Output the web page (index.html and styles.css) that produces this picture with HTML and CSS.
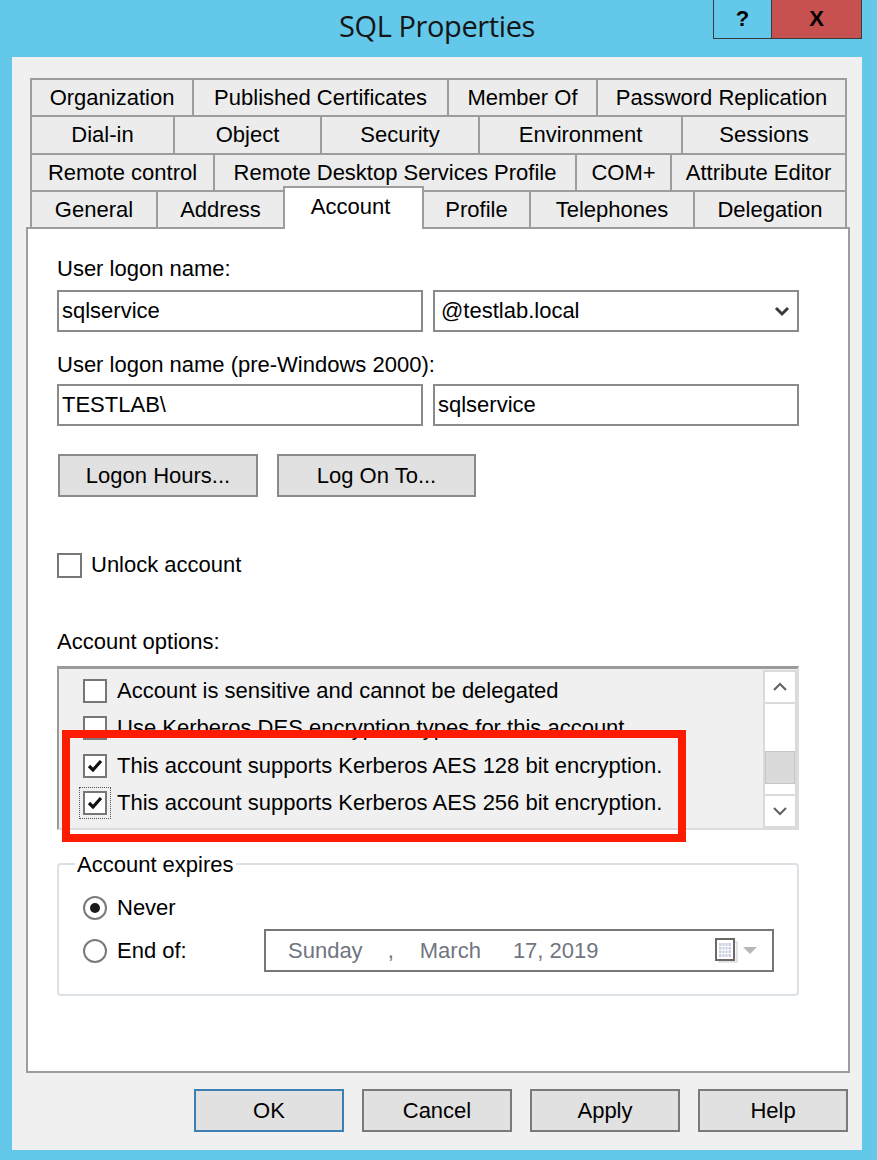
FILE: index.html
```html
<!DOCTYPE html>
<html>
<head>
<meta charset="utf-8">
<title>SQL Properties</title>
<link rel="stylesheet" href="styles.css">
</head>
<body>
<div class="window">
  <div class="titlebar">
    <div class="tb-side"></div>
    <div class="title">SQL Properties</div>
    <div class="caption-btns">
      <div class="cap help">?</div>
      <div class="cap close">X</div>
    </div>
  </div>
  <div class="dialog">
    <div class="tabs">
      <div class="tab-row r1">
        <div class="tab">Organization</div>
        <div class="tab">Published Certificates</div>
        <div class="tab">Member Of</div>
        <div class="tab">Password Replication</div>
      </div>
      <div class="tab-row r2">
        <div class="tab">Dial-in</div>
        <div class="tab">Object</div>
        <div class="tab">Security</div>
        <div class="tab">Environment</div>
        <div class="tab">Sessions</div>
      </div>
      <div class="tab-row r3">
        <div class="tab">Remote control</div>
        <div class="tab">Remote Desktop Services Profile</div>
        <div class="tab">COM+</div>
        <div class="tab">Attribute Editor</div>
      </div>
      <div class="tab-row r4">
        <div class="tab">General</div>
        <div class="tab">Address</div>
        <div class="tab active">Account</div>
        <div class="tab">Profile</div>
        <div class="tab">Telephones</div>
        <div class="tab">Delegation</div>
      </div>
    </div>

    <div class="panel">
      <div class="label">User logon name:</div>
      <div class="field-row">
        <div class="input">sqlservice</div>
        <div class="input combo">
          <span class="combo-text">@testlab.local</span>
          <svg class="chev" width="16" height="11" viewBox="0 0 16 11"><polyline points="2,2 8,8 14,2" fill="none" stroke="#3a3a3a" stroke-width="3"/></svg>
        </div>
      </div>
      <div class="label label2">User logon name (pre-Windows 2000):</div>
      <div class="field-row row2">
        <div class="input">TESTLAB\</div>
        <div class="input">sqlservice</div>
      </div>
      <div class="btn-row">
        <div class="btn hours">Logon Hours...</div>
        <div class="btn logon-to">Log On To...</div>
      </div>

      <div class="check-row unlock">
        <span class="checkbox"></span>
        <span class="check-label">Unlock account</span>
      </div>

      <div class="label options-label">Account options:</div>
      <div class="options-wrap">
        <div class="listbox">
          <div class="items">
            <div class="item"><span class="checkbox"></span><span class="item-text">Account is sensitive and cannot be delegated</span></div>
            <div class="item"><span class="checkbox"></span><span class="item-text">Use Kerberos DES encryption types for this account</span></div>
            <div class="item"><span class="checkbox checked"><svg width="20" height="20" viewBox="0 0 20 20"><polyline points="4,10 8,14 16,5" fill="none" stroke="#111" stroke-width="3.2"/></svg></span><span class="item-text">This account supports Kerberos AES 128 bit encryption.</span></div>
            <div class="item"><span class="checkbox checked focus"><svg width="20" height="20" viewBox="0 0 20 20"><polyline points="4,10 8,14 16,5" fill="none" stroke="#111" stroke-width="3.2"/></svg></span><span class="item-text">This account supports Kerberos AES 256 bit encryption.</span></div>
          </div>
          <div class="scrollbar">
            <div class="sb-btn sb-up"><svg width="16" height="10" viewBox="0 0 16 10"><polyline points="2,8 8,2 14,8" fill="none" stroke="#606060" stroke-width="2"/></svg></div>
            <div class="sb-track1"></div>
            <div class="sb-thumb"></div>
            <div class="sb-track2"></div>
            <div class="sb-btn sb-down"><svg width="16" height="10" viewBox="0 0 16 10"><polyline points="2,2 8,8 14,2" fill="none" stroke="#606060" stroke-width="2"/></svg></div>
          </div>
        </div>
        <div class="highlight"></div>
      </div>

      <div class="group">
        <div class="group-title">Account expires</div>
        <div class="radio-row never">
          <span class="radio checked"></span>
          <span class="radio-label">Never</span>
        </div>
        <div class="radio-row endof">
          <span class="radio"></span>
          <span class="radio-label">End of:</span>
          <div class="datepicker">
            <span class="d-day">Sunday</span>
            <span class="d-comma">,</span>
            <span class="d-month">March</span>
            <span class="d-date">17, 2019</span>
            <svg class="cal" width="24" height="26" viewBox="0 0 24 26">
              <rect x="4" y="4" width="18" height="20" fill="#f4f4f4" stroke="#d0d0d0" stroke-width="1"/>
              <rect x="1" y="1" width="18" height="21" fill="#fff" stroke="#6d6867" stroke-width="2"/>
              <rect x="4" y="5" width="12" height="14" fill="#c9cde0"/>
              <path d="M4 8.5H16M4 12H16M4 15.5H16M7 5V19M10 5V19M13 5V19" stroke="#fff" stroke-width="1"/>
            </svg>
            <svg class="tri" width="16" height="9" viewBox="0 0 16 9"><polygon points="1,1 15,1 8,8" fill="#b8b8b8"/></svg>
          </div>
        </div>
      </div>
    </div>

    <div class="dlg-buttons">
      <div class="dlg-btn default">OK</div>
      <div class="dlg-btn">Cancel</div>
      <div class="dlg-btn">Apply</div>
      <div class="dlg-btn">Help</div>
    </div>
  </div>
</div>
</body>
</html>
```

FILE: styles.css
```css
* { box-sizing: border-box; }
html, body { margin: 0; padding: 0; }
body {
  background: #63c8ea;
  font-family: "Liberation Sans", Arial, sans-serif;
  font-size: 22px;
  color: #000;
  width: 877px;
  height: 1160px;
  overflow: hidden;
}
.window { width: 850px; margin-left: 12px; }

.titlebar {
  height: 57px;
  display: grid;
  grid-template-columns: 1fr auto 1fr;
}
.title {
  font-family: "Open Sans", "Noto Sans", sans-serif;
  font-size: 29px;
  line-height: 52px;
  color: #151515;
  letter-spacing: -0.4px;
}
.caption-btns {
  justify-self: end;
  align-self: start;
  display: flex;
  height: 39px;
  border: 1px solid #3a3a3a;
  border-top: none;
}
.cap {
  display: flex;
  align-items: center;
  justify-content: center;
  font-weight: bold;
  font-size: 22px;
  color: #000;
}
.cap.help { width: 58px; border-right: 1px solid #3a3a3a; }
.cap.close { width: 89px; background: #c75050; }

.dialog {
  background: #f0f0f0;
  padding: 21px 12px 18px 14px;
  height: 1093px;
}

.tabs { margin: 0 3px 0 4px; }
.tab-row { display: grid; height: 37px; }
.tab-row.r2 { height: 38px; }
.r1 { grid-template-columns: 162px 255px 149px 251px; }
.r2 { grid-template-columns: 143px 147px 158px 203px 166px; }
.r3 { grid-template-columns: 183px 362px 95px 177px; }
.r4 { grid-template-columns: 126px 127px 139px 107px 164px 154px; }
.tab {
  border-top: 2px solid #9d9d9d;
  border-left: 2px solid #9d9d9d;
  background: #ececec;
  display: flex;
  align-items: center;
  justify-content: center;
  white-space: nowrap;
}
.tab:last-child { border-right: 2px solid #9d9d9d; }
.tab.active {
  background: #fff;
  margin: -4px -2px -2px 0;
  padding: 0 6px 4px 0;
  border-right: 2px solid #9d9d9d;
  position: relative;
  z-index: 1;
}

.panel {
  background: #fff;
  border: 2px solid #9d9d9d;
  height: 846px;
  padding: 27px 49px 0 29px;
}
.label { line-height: 26px; height: 26px; white-space: nowrap; }
.label2 { margin-top: 20px; }
.field-row { display: grid; grid-template-columns: 1fr 1fr; gap: 10px; margin-top: 8px; }
.field-row.row2 { margin-top: 6px; }
.input {
  min-width: 0;
  height: 42px;
  border: 2px solid #8a8a8a;
  background: #fff;
  padding-left: 3px;
  display: flex;
  align-items: center;
}
.input.combo { padding: 0 7px 0 6px; justify-content: space-between; }

.btn-row { display: flex; gap: 19px; margin-top: 28px; padding-left: 1px; }
.btn {
  height: 43px;
  border: 2px solid #8a8a8a;
  background: #e1e1e1;
  display: flex;
  align-items: center;
  justify-content: center;
}
.btn.hours { width: 200px; }
.btn.logon-to { width: 199px; }

.check-row { display: flex; align-items: center; height: 26px; }
.unlock { margin-top: 55px; }
.checkbox {
  width: 25px;
  height: 25px;
  border: 2px solid #777;
  background: #fff;
  flex: none;
  display: flex;
  align-items: center;
  justify-content: center;
}
.check-label { margin-left: 9px; }
.options-label { margin-top: 51px; }

.options-wrap { position: relative; margin-top: 11px; }
.listbox {
  height: 164px;
  display: flex;
  background: #f0f0f0;
  border-top: 3px solid #9a9a9a;
  border-left: 2px solid #9a9a9a;
  border-right: 2px solid #dcdcdc;
  border-bottom: 2px solid #dcdcdc;
}
.items { flex: 1; overflow: hidden; padding-top: 3px; }
.item {
  height: 37.5px;
  display: flex;
  align-items: center;
  padding-left: 24px;
  white-space: nowrap;
}
.item .checkbox { width: 24px; height: 24px; }
.item-text { margin-left: 10px; }
.checkbox.focus { outline: 1px dotted #555; outline-offset: 3px; }

.scrollbar {
  width: 34px;
  margin-top: 1px;
  background: #fff;
  border: 2px solid #dadada;
  display: flex;
  flex-direction: column;
}
.sb-btn { height: 32px; display: flex; align-items: center; justify-content: center; flex: none; }
.sb-up { border-bottom: 2px solid #dadada; }
.sb-down { border-top: 2px solid #dadada; }
.sb-track1 { height: 47px; flex: none; }
.sb-thumb { height: 33px; flex: none; background: #dadada; border: 1px solid #c6c6c6; }
.sb-track2 { flex: 1; }

.highlight {
  position: absolute;
  left: 5px;
  top: 64px;
  width: 624px;
  height: 112px;
  border: 8px solid #fe1c00;
}

.group {
  margin-top: 33px;
  height: 133px;
  border: 2px solid #dbe1e6;
  border-radius: 4px;
  padding-left: 24px;
}
.group-title {
  width: fit-content;
  margin: -13px 0 0 -8px;
  padding: 0 2px;
  background: #fff;
  line-height: 26px;
}
.radio-row { display: flex; align-items: center; }
.radio-row.never { height: 26px; margin-top: 17px; }
.radio-row.endof { height: 43px; margin-top: 8px; }
.radio {
  width: 24px;
  height: 24px;
  border: 2px solid #7a7a7a;
  border-radius: 50%;
  background: #fff;
  flex: none;
  display: flex;
  align-items: center;
  justify-content: center;
}
.radio.checked::after {
  content: "";
  width: 10px;
  height: 10px;
  border-radius: 50%;
  background: #1a1a1a;
}
.radio-label { margin-left: 10px; }

.datepicker {
  width: 510px;
  height: 43px;
  margin-left: auto;
  margin-right: 23px;
  border: 2px solid #777;
  background: #fff;
  color: #70757f;
  display: flex;
  align-items: center;
  padding-left: 22px;
  white-space: nowrap;
}
.d-comma { margin-left: 25px; }
.d-month { margin-left: 26px; }
.d-date { margin-left: 32px; }
.cal { margin-left: auto; }
.tri { margin: 0 14px 0 3px; }

.dlg-buttons {
  display: flex;
  justify-content: flex-end;
  gap: 18px;
  margin-top: 16px;
  padding-right: 2px;
}
.dlg-btn {
  width: 150px;
  height: 43px;
  border: 2px solid #7a7a7a;
  background: #e1e1e1;
  display: flex;
  align-items: center;
  justify-content: center;
}
.dlg-btn.default { border-color: #3c7fb1; }
```
